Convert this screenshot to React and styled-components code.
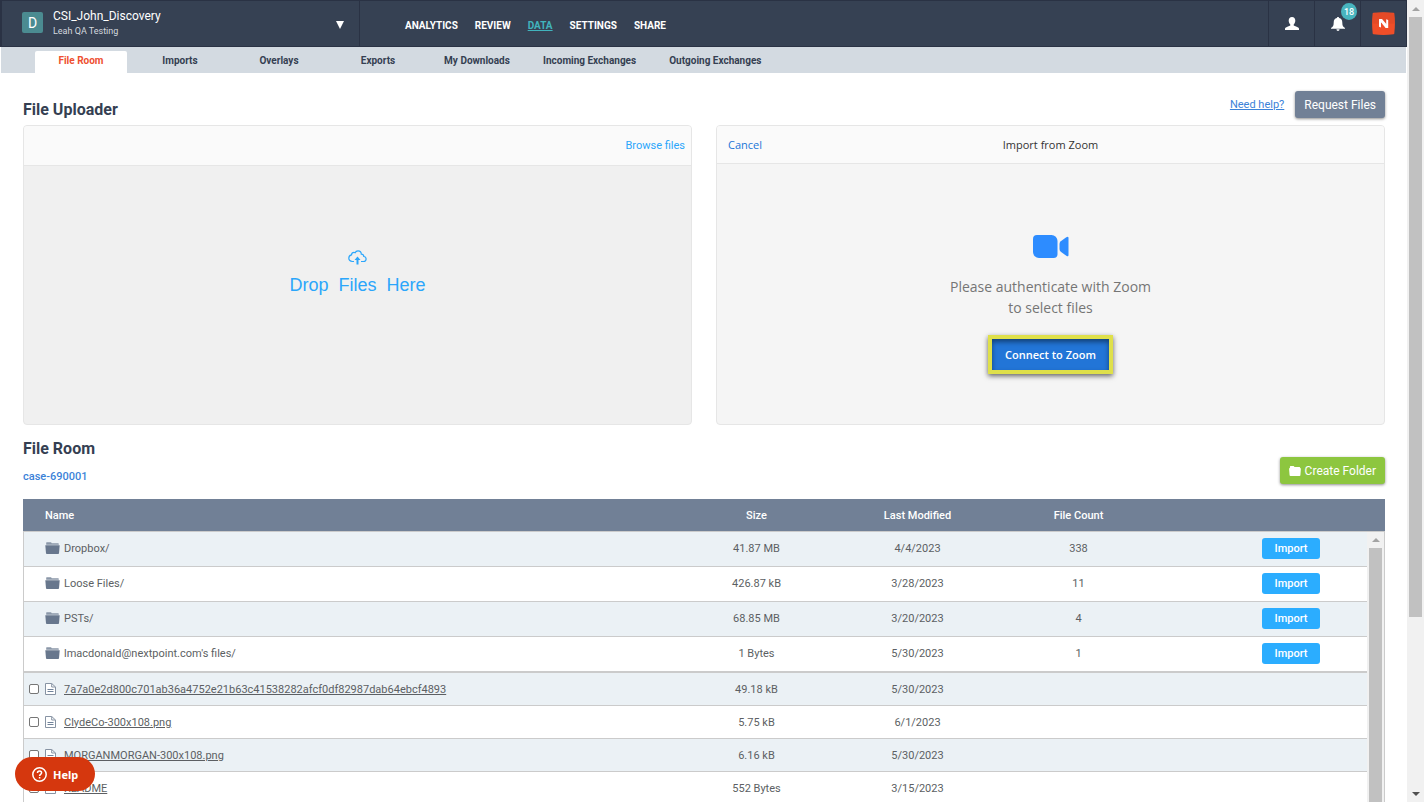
import React from "react";
import styled, { createGlobalStyle, css } from "styled-components";

const GlobalStyle = createGlobalStyle`
  *, *::before, *::after { box-sizing: border-box; }
  body {
    margin: 0;
    background: #fff;
    color: #353f52;
    font-family: Roboto, "Liberation Sans", sans-serif;
    font-size: 11px;
  }
  button, input { font-family: inherit; }
  h1, h2, p { margin: 0; }
  svg { display: block; flex: none; }
`;

const segoe = `"Open Sans", "Noto Sans", sans-serif`;

const Shell = styled.div`
  display: flex;
  height: 100vh;
  overflow: hidden;
`;

const Page = styled.div`
  flex: 1;
  min-width: 0;
  display: flex;
  flex-direction: column;
`;

/* ---------- scrollbars ---------- */

const Track = styled.div`
  width: 17px;
  flex: none;
  display: flex;
  flex-direction: column;
  align-items: center;
  background: #f1f1f1;
  ${(p) =>
    p.$overlay &&
    css`
      position: absolute;
      top: 33px;
      right: 0;
      bottom: 0;
      width: 18px;
      border-right: 1px solid #cbcbcb;
    `}
`;

const Arrow = styled.span`
  height: 17px;
  display: flex;
  align-items: center;
`;

const Thumb = styled.div`
  width: 13px;
  height: ${(p) => p.$size};
  background: #c1c1c1;
`;

const Spacer = styled.div`
  flex: 1;
`;

function Scrollbar({ size, overlay }) {
  return (
    <Track $overlay={overlay} aria-hidden="true">
      <Arrow>
        <svg width="8" height="4" viewBox="0 0 8 4">
          <path d="M0 4 4 0l4 4z" fill="#a3a3a3" />
        </svg>
      </Arrow>
      <Thumb $size={size} />
      {!overlay && (
        <>
          <Spacer />
          <Arrow>
            <svg width="8" height="4" viewBox="0 0 8 4">
              <path d="M0 0h8L4 4z" fill="#505050" />
            </svg>
          </Arrow>
        </>
      )}
    </Track>
  );
}

/* ---------- top bar ---------- */

const TopBar = styled.header`
  flex: none;
  display: flex;
  height: 47px;
  background: #364153;
  border: 1px solid #2a3244;
  border-left-width: 2px;
  color: #fff;
`;

const CaseSelector = styled.button`
  width: 358px;
  flex: none;
  display: flex;
  align-items: center;
  gap: 10px;
  padding: 0 15px 2px 20px;
  border: 0;
  border-right: 1px solid #2a3244;
  background: none;
  color: inherit;
  text-align: left;
`;

const CaseBadge = styled.span`
  width: 21px;
  height: 21px;
  display: grid;
  place-items: center;
  border-radius: 2px;
  background: #4b8b91;
  font-size: 14px;
`;

const CaseText = styled.span`
  flex: 1;
  display: flex;
  flex-direction: column;
`;

const CaseName = styled.span`
  font-size: 12px;
  line-height: 16px;
`;

const CaseOwner = styled.span`
  font-size: 9px;
  line-height: 14px;
  color: #d3d8df;
`;

const Caret = styled.span`
  padding-top: 4px;
`;

const MainNav = styled.nav`
  flex: 1;
  display: flex;
  align-items: center;
  gap: 17px;
  padding: 5px 0 0 45px;
`;

const NavLink = styled.a`
  font-size: 10px;
  line-height: 12px;
  font-weight: 700;
  color: ${(p) => (p.$active ? "#41b3bd" : "#fff")};
  text-decoration: ${(p) => (p.$active ? "underline" : "none")};
  text-underline-offset: 1px;
`;

const IconCell = styled.button`
  position: relative;
  width: 46px;
  display: grid;
  place-items: center;
  padding: 0;
  border: 0;
  border-left: 1px solid #2a3244;
  background: none;
  color: #fff;
`;

const CountBadge = styled.span`
  position: absolute;
  top: 2px;
  right: 3px;
  width: 16px;
  height: 17px;
  display: grid;
  place-items: center;
  border-radius: 50%;
  background: #48b5bf;
  font-size: 9px;
  font-weight: 500;
`;

const TabBar = styled.nav`
  flex: none;
  display: flex;
  align-items: flex-end;
  gap: 7px;
  height: 26px;
  padding-left: 34px;
  margin: 0 1px;
  background: #d3dae1;
`;

const Tab = styled.a`
  min-width: 92px;
  height: 22px;
  padding: 0 13px;
  border-radius: 2px 2px 0 0;
  background: ${(p) => (p.$active ? "#fff" : "transparent")};
  color: ${(p) => (p.$active ? "#ee4f30" : "#353f52")};
  font-size: 10px;
  line-height: 20px;
  font-weight: 700;
  text-align: center;
  text-decoration: none;
  white-space: nowrap;
`;

/* ---------- uploader ---------- */

const Content = styled.main`
  flex: 1;
  min-height: 0;
  display: flex;
  flex-direction: column;
  padding: 18px 22px 0 23px;
`;

const UploaderHead = styled.div`
  flex: none;
  display: flex;
  align-items: flex-end;
  margin-bottom: 7px;
`;

const Title = styled.h1`
  flex: 1;
  font-size: 16px;
  line-height: 16px;
  font-weight: 700;
`;

const HelpLink = styled.a`
  margin-right: 11px;
  color: #3b82d8;
  line-height: 27px;
`;

const RaisedButton = styled.button`
  height: 27px;
  display: flex;
  align-items: center;
  gap: 4px;
  padding: 0 9px;
  border: 0;
  border-radius: 3px;
  background: ${(p) => (p.$green ? "#8dc63f" : "#718096")};
  color: #fff;
  font-size: 12px;
  box-shadow: 0 1px 3px rgba(0, 0, 0, 0.45);
`;

const Panels = styled.div`
  flex: none;
  display: grid;
  grid-template-columns: 1fr 1fr;
  gap: 24px;
`;

const Panel = styled.section`
  height: 300px;
  display: flex;
  flex-direction: column;
  border: 1px solid #e6e6e6;
  border-radius: 4px;
  overflow: hidden;
  background: ${(p) => (p.$drop ? "#f0f0f0" : "#f5f5f5")};
`;

const DropHead = styled.div`
  height: 40px;
  display: flex;
  align-items: center;
  justify-content: flex-end;
  padding: 0 6px;
  border-bottom: 1px solid #e6e6e6;
  background: #fafafa;
`;

const ZoomHead = styled.div`
  height: 38px;
  display: grid;
  grid-template-columns: 1fr auto 1fr;
  align-items: center;
  padding: 0 11px;
  border-bottom: 1px solid #e6e6e6;
  background: #fafafa;
  font-family: ${segoe};
  line-height: 14px;
  color: #333;
`;

const TextButton = styled.button`
  justify-self: start;
  padding: 0;
  border: 0;
  background: none;
  font-size: 11px;
  line-height: 14px;
  color: ${(p) => (p.$light ? "#2ba6fb" : "#2275d7")};
`;

const DropArea = styled.div`
  flex: 1;
  display: flex;
  flex-direction: column;
  align-items: center;
  padding-top: 84px;
  gap: 10px;
  color: #2ba6fb;
  font-family: "Liberation Sans", Arial, sans-serif;
  font-size: 18px;
  line-height: 20px;
`;

const ZoomArea = styled.div`
  flex: 1;
  display: flex;
  flex-direction: column;
  align-items: center;
  padding-top: 71px;
  font-family: ${segoe};
`;

const ZoomText = styled.p`
  margin: 18px 0 17px;
  color: #757575;
  font-size: 14px;
  line-height: 21px;
  text-align: center;
`;

const ConnectButton = styled.button`
  height: 39px;
  padding: 0 13px;
  border: 4px solid #dfe04a;
  background: #2275d7;
  color: #fff;
  font-size: 11px;
  font-weight: 600;
  box-shadow: 0 2px 5px rgba(0, 0, 0, 0.6), inset 0 3px 5px rgba(0, 0, 0, 0.45);
`;

/* ---------- file room ---------- */

const RoomHead = styled.div`
  flex: none;
  display: flex;
  align-items: flex-end;
  justify-content: space-between;
  padding: 14px 0 13px;
`;

const RoomActions = styled.div`
  padding-bottom: 2px;
`;

const RoomTitle = styled.h2`
  margin-bottom: 9px;
  font-size: 16px;
  line-height: 20px;
  font-weight: 700;
`;

const CaseLink = styled.a`
  display: block;
  color: #3b82d8;
  line-height: 18px;
  font-weight: 500;
  text-decoration: none;
`;

const TableFrame = styled.div`
  position: relative;
  flex: 1;
  min-height: 0;
  overflow: hidden;
`;

const FileTable = styled.table`
  width: 100%;
  table-layout: fixed;
  border-collapse: separate;
  border-spacing: 0;
  color: #5c5f63;
`;

const Col = styled.col`
  width: ${(p) => p.$w};
`;

const HeadCell = styled.th`
  height: 33px;
  padding: ${(p) => (p.$name ? "0 22px" : "0")};
  border-bottom: 1px solid #cbcbcb;
  background: #718096;
  color: #fff;
  font-weight: 500;
  text-align: ${(p) => (p.$name ? "left" : "center")};
`;

const Row = styled.tr`
  height: ${(p) => (p.$file ? "33px" : p.$last ? "36px" : "35px")};
  background: #fff;
  &:nth-child(odd) {
    background: #ebf1f5;
  }
  td {
    padding-bottom: ${(p) => (p.$file ? "0" : "2px")};
    border-bottom: ${(p) => (p.$last ? "2px" : "1px")} solid #cbcbcb;
  }
`;

const Cell = styled.td`
  padding: 0;
  text-align: center;
`;

const NameCell = styled(Cell)`
  padding-left: ${(p) => (p.$file ? "5px" : "21px")};
  border-left: 1px solid #cbcbcb;
`;

const NameLine = styled.div`
  display: flex;
  align-items: center;
  gap: 4px;
`;

const FileLabel = styled.label`
  display: flex;
  align-items: center;
  gap: 6px;
`;

const Check = styled.input`
  appearance: none;
  width: 10px;
  height: 10px;
  margin: 0;
  border: 1px solid #767676;
  border-radius: 2px;
  background: #fff;
`;

const FileLink = styled.a`
  color: inherit;
  margin-left: 4px;
  text-underline-offset: 1px;
`;

const ActionCell = styled(Cell)`
  padding-right: 65px;
  text-align: right;
`;

const ImportButton = styled.button`
  width: 58px;
  height: 21px;
  padding: 0;
  border: 0;
  border-radius: 3px;
  background: #2badff;
  color: #fff;
  font-size: 11px;
  font-weight: 500;
  vertical-align: middle;
`;

const HelpButton = styled.button`
  position: fixed;
  left: 15px;
  bottom: 11px;
  height: 34px;
  display: flex;
  align-items: center;
  gap: 6px;
  padding: 0 17px;
  border: 0;
  border-radius: 17px;
  background: #d5370e;
  color: #fff;
  font-family: "Noto Sans", sans-serif;
  font-size: 11px;
  font-weight: 700;
`;

/* ---------- icons ---------- */

const UserIcon = () => (
  <svg width="14" height="13" viewBox="0 0 14 13" fill="currentColor">
    <path d="M7 0c2.100 0 3.300 1.500 3.300 3.600 0 1.700-.7 3.100-1.600 3.900v1.100l3.500 1.300c1.200.5 1.800 1 1.800 2V13H0v-1.100c0-1 .6-1.500 1.800-2l3.500-1.300V7.500C4.400 6.700 3.700 5.300 3.700 3.600 3.700 1.500 4.900 0 7 0z" />
  </svg>
);

const BellIcon = () => (
  <svg width="14" height="14" viewBox="0 0 14 14" fill="currentColor">
    <path d="M7 0c.7 0 1.100.5 1.100 1.100C10.300 1.600 11.300 3.300 11.300 5.500c0 3 .6 4.200 2.700 5.500v.8H0V11c2.100-1.300 2.700-2.500 2.700-5.500 0-2.200 1-3.900 3.200-4.400C5.900.5 6.300 0 7 0zM5.500 12.300h3C8.500 13.300 7.900 14 7 14s-1.500-.7-1.500-1.700z" />
  </svg>
);

const BrandIcon = () => (
  <svg width="23" height="23" viewBox="0 0 23 23">
    <path d="M1.500.8Q11.500-.5 21.500.8q.7.100.8.800Q23.500 11.500 22.300 21.500q-.1.700-.8.800Q11.500 23.500 1.500 22.300q-.7-.1-.8-.8Q-.5 11.500.7 1.600q.1-.7.800-.8z" fill="#f04e28" />
    <path d="M.2 11.500h22.600L22 1.500Q11.500-.5 1 1.500z" fill="#dc4827" opacity=".6" />
    <path d="M7 7l2 1v7.500L7 14.800zM14.200 7.200l2 .8v8l-2-.9z" fill="#fff" />
    <path d="M7 7h3l4.500 5.200 1.700 3.800h-2.600L9 10.300z" fill="#fff" />
  </svg>
);

const CloudIcon = () => (
  <svg width="19" height="15" viewBox="0 0 19 15" fill="none" stroke="currentColor" strokeWidth="1.200">
    <path d="M6 11.500H4.300C2.300 11.500.8 10 .8 8.200c0-1.700 1.100-3 2.700-3.300.1-1.500 1.200-2.500 2.500-2.500.4 0 .8.100 1.100.3C7.600 1.500 8.600.8 10 .8c2 0 3.300 1.400 3.300 3.300 1.600 0 2.500 1 2.500 2.400 1.300.2 2.300 1.200 2.300 2.500 0 1.500-1.100 2.500-2.600 2.500H13" />
    <path d="M9.500 6.500 6.500 10h2v4.400h2V10h2z" fill="currentColor" stroke="none" />
  </svg>
);

const CameraIcon = () => (
  <svg width="36" height="23" viewBox="0 0 36 23" fill="#2d8cff">
    <path d="M4 0h14.500A6 6 0 0 1 24.500 6v13a4 4 0 0 1-4 4H6a6 6 0 0 1-6-6V4a4 4 0 0 1 4-4z" />
    <path d="M26.500 9q0-1.700 1.300-2.700l5.500-4q2-1.300 2.200.4v17.600q-.2 1.700-2.200.4l-5.500-4q-1.300-1-1.300-2.700z" />
  </svg>
);

const FolderIcon = () => (
  <svg width="15" height="12" viewBox="0 0 15 12">
    <path d="M1.200 2.700V.8q0-.5.500-.5h4.100q.5 0 .7.500l.2.500h6.500q.6 0 .6.600v.8z" fill="#8a97a8" />
    <path d="M.3 3.200h14.400l-.7 8q-.1.700-.8.700H1.800q-.7 0-.8-.7z" fill="#68778d" />
  </svg>
);

const SmallFolder = () => (
  <svg width="12" height="10" viewBox="0 0 12 10" fill="currentColor">
    <path d="M.9 2V.7Q.9.100 1.500.100h3q.5 0 .7.500l.2.500h5.100q.6 0 .6.600V2.300h.8l-.5 7q-.1.700-.8.700H1.400q-.7 0-.8-.7L0 2.300h.9z" />
  </svg>
);

const FileIcon = () => (
  <svg width="11" height="12" viewBox="0 0 11 12" fill="none" stroke="#8793a3">
    <path d="M.5.500h6.200l3.800 3.500v7.500H.5z" fill="#fff" />
    <path d="M6.700.5v3.500h3.800" />
    <path d="M2.500 6.500h6M2.500 8.500h6" stroke="#71839a" />
  </svg>
);

const QuestionIcon = () => (
  <svg width="15" height="15" viewBox="0 0 15 15" fill="none" stroke="currentColor" strokeWidth="1.500">
    <circle cx="7.500" cy="7.500" r="6.700" />
    <path d="M5.500 6c0-1.300.8-2 2-2s2.100.7 2.100 1.800c0 1.500-2 1.500-2 3.100" />
    <path d="M7.600 10v1.500" />
  </svg>
);

/* ---------- data ---------- */

const nav = ["ANALYTICS", "REVIEW", "DATA", "SETTINGS", "SHARE"];
const tabs = ["File Room", "Imports", "Overlays", "Exports", "My Downloads", "Incoming Exchanges", "Outgoing Exchanges"];

const folders = [
  ["Dropbox/", "41.87 MB", "4/4/2023", "338"],
  ["Loose Files/", "426.87 kB", "3/28/2023", "11"],
  ["PSTs/", "68.85 MB", "3/20/2023", "4"],
  ["lmacdonald@nextpoint.com's files/", "1 Bytes", "5/30/2023", "1"],
];

const files = [
  ["7a7a0e2d800c701ab36a4752e21b63c41538282afcf0df82987dab64ebcf4893", "49.18 kB", "5/30/2023"],
  ["ClydeCo-300x108.png", "5.75 kB", "6/1/2023"],
  ["MORGANMORGAN-300x108.png", "6.16 kB", "5/30/2023"],
  ["README", "552 Bytes", "3/15/2023"],
];

export default function App() {
  return (
    <Shell>
      <GlobalStyle />
      <Page>
        <TopBar>
          <CaseSelector>
            <CaseBadge>D</CaseBadge>
            <CaseText>
              <CaseName>CSI_John_Discovery</CaseName>
              <CaseOwner>Leah QA Testing</CaseOwner>
            </CaseText>
            <Caret>
              <svg width="8" height="8" viewBox="0 0 8 8">
                <path d="M0 0h8L4 8z" fill="#fff" />
              </svg>
            </Caret>
          </CaseSelector>
          <MainNav>
            {nav.map((n) => (
              <NavLink key={n} href="#" $active={n === "DATA"}>{n}</NavLink>
            ))}
          </MainNav>
          <IconCell aria-label="Account"><UserIcon /></IconCell>
          <IconCell aria-label="Notifications">
            <BellIcon />
            <CountBadge>18</CountBadge>
          </IconCell>
          <IconCell aria-label="Nextpoint"><BrandIcon /></IconCell>
        </TopBar>
        <TabBar>
          {tabs.map((t, i) => (
            <Tab key={t} href="#" $active={i === 0}>{t}</Tab>
          ))}
        </TabBar>
        <Content>
          <UploaderHead>
            <Title>File Uploader</Title>
            <HelpLink href="#">Need help?</HelpLink>
            <RaisedButton>Request Files</RaisedButton>
          </UploaderHead>
          <Panels>
            <Panel $drop>
              <DropHead>
                <TextButton $light>Browse files</TextButton>
              </DropHead>
              <DropArea>
                <CloudIcon />
                <span>Drop&nbsp; Files&nbsp; Here</span>
              </DropArea>
            </Panel>
            <Panel>
              <ZoomHead>
                <TextButton>Cancel</TextButton>
                <span>Import from Zoom</span>
              </ZoomHead>
              <ZoomArea>
                <CameraIcon />
                <ZoomText>
                  Please authenticate with Zoom
                  <br />
                  to select files
                </ZoomText>
                <ConnectButton>Connect to Zoom</ConnectButton>
              </ZoomArea>
            </Panel>
          </Panels>
          <RoomHead>
            <div>
              <RoomTitle>File Room</RoomTitle>
              <CaseLink href="#">case-690001</CaseLink>
            </div>
            <RoomActions>
              <RaisedButton $green>
                <SmallFolder />
                Create Folder
              </RaisedButton>
            </RoomActions>
          </RoomHead>
          <TableFrame>
            <FileTable>
              <colgroup>
                <Col />
                <Col $w="161px" />
                <Col $w="161px" />
                <Col $w="161px" />
                <Col $w="226px" />
              </colgroup>
              <thead>
                <tr>
                  <HeadCell $name>Name</HeadCell>
                  <HeadCell>Size</HeadCell>
                  <HeadCell>Last Modified</HeadCell>
                  <HeadCell>File Count</HeadCell>
                  <HeadCell aria-label="Actions" />
                </tr>
              </thead>
              <tbody>
                {folders.map(([name, size, date, count], i) => (
                  <Row key={name} $last={i === folders.length - 1}>
                    <NameCell>
                      <NameLine><FolderIcon />{name}</NameLine>
                    </NameCell>
                    <Cell>{size}</Cell>
                    <Cell>{date}</Cell>
                    <Cell>{count}</Cell>
                    <ActionCell><ImportButton>Import</ImportButton></ActionCell>
                  </Row>
                ))}
                {files.map(([name, size, date]) => (
                  <Row key={name} $file>
                    <NameCell $file>
                      <NameLine>
                        <FileLabel>
                          <Check type="checkbox" aria-label={name} />
                          <FileIcon />
                        </FileLabel>
                        <FileLink href="#">{name}</FileLink>
                      </NameLine>
                    </NameCell>
                    <Cell>{size}</Cell>
                    <Cell>{date}</Cell>
                    <Cell />
                    <Cell />
                  </Row>
                ))}
              </tbody>
            </FileTable>
            <Scrollbar overlay size="100%" />
          </TableFrame>
        </Content>
      </Page>
      <Scrollbar size="600px" />
      <HelpButton><QuestionIcon />Help</HelpButton>
    </Shell>
  );
}
